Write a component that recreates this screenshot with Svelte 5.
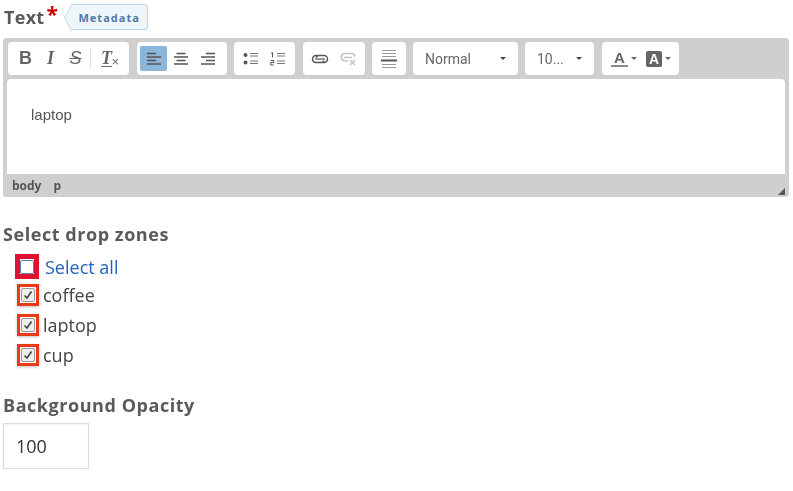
<script lang="ts">
	const zones = ['coffee', 'laptop', 'cup'];
</script>

<div class="page">
	<div class="text-head">
		<span class="field-label">Text</span>
		<span class="required">*</span>
		<span class="tag">Metadata</span>
	</div>

	<div class="editor">
		<div class="toolbar">
			<div class="group g1">
				<span class="btn b">B</span>
				<span class="btn i">I</span>
				<span class="btn s">S</span>
				<span class="sep"></span>
				<span class="btn clear"><span class="tx">T</span><span class="x">×</span></span>
			</div>
			<div class="group g2">
				<span class="btn active">
					<svg width="16" height="14" viewBox="0 0 16 14"><path d="M1 1.500h9M1 5h14M1 8.500h9M1 12h14" stroke="#555" stroke-width="1.700" /></svg>
				</span>
				<span class="btn">
					<svg width="16" height="14" viewBox="0 0 16 14"><path d="M3.500 1.500h9M1 5h14M3.500 8.500h9M1 12h14" stroke="#555" stroke-width="1.700" /></svg>
				</span>
				<span class="btn">
					<svg width="16" height="14" viewBox="0 0 16 14"><path d="M6 1.500h9M1 5h14M6 8.500h9M1 12h14" stroke="#555" stroke-width="1.700" /></svg>
				</span>
			</div>
			<div class="group g3">
				<span class="btn">
					<svg width="16" height="14" viewBox="0 0 16 14"><circle cx="2.500" cy="3" r="2" fill="#555" /><circle cx="2.500" cy="10.500" r="2" fill="#555" /><path d="M7 1.500h8M7 4h8M7 9h8M7 11.500h8" stroke="#777" stroke-width="1" /></svg>
				</span>
				<span class="btn">
					<svg width="16" height="14" viewBox="0 0 16 14"><path d="M2.500 .500v5M1 1.500l1.500-1M.800 8.500h3v2h-3v2.500h3" stroke="#555" stroke-width="1" fill="none" /><path d="M7 1.500h8M7 4h8M7 9h8M7 11.500h8" stroke="#777" stroke-width="1" /></svg>
				</span>
			</div>
			<div class="group g4">
				<span class="btn">
					<svg width="18" height="12" viewBox="0 0 18 12"><path d="M7 2.500H5a3.500 3.500 0 0 0 0 7h5a3.500 3.500 0 0 0 3-2" fill="none" stroke="#555" stroke-width="1.500" /><path d="M11 9.500h2a3.500 3.500 0 0 0 0-7H8a3.500 3.500 0 0 0-3 2" fill="none" stroke="#555" stroke-width="1.500" /><path d="M4 6h10" stroke="#555" stroke-width="1.200" /></svg>
				</span>
				<span class="btn">
					<svg width="18" height="14" viewBox="0 0 18 14"><path d="M9 9H5.500a3.800 3.800 0 0 1 0-7.500h7a3.800 3.800 0 0 1 3.500 3M5 5.500h8" fill="none" stroke="#c4c4c4" stroke-width="1.500" /><path d="M11 8l5 5M16 8l-5 5" stroke="#c4c4c4" stroke-width="1.500" /></svg>
				</span>
			</div>
			<div class="group g5">
				<svg width="16" height="20" viewBox="0 0 16 20"><path d="M1 1.500h14M1 4.500h14M1 7.500h14M1 15.500h14M1 18.500h14" stroke="#999" stroke-width="1" /><path d="M0 11.500h16" stroke="#555" stroke-width="2" /></svg>
			</div>
			<div class="group select g6"><span>Normal</span><i class="caret"></i></div>
			<div class="group select g7"><span>10...</span><i class="caret"></i></div>
			<div class="group g8">
				<span class="color"><span class="fg">A</span><i class="caret small"></i></span>
				<span class="color"><span class="bg">A</span><i class="caret small"></i></span>
			</div>
		</div>
		<div class="content"><p>laptop</p></div>
		<div class="path">
			<span>body</span>
			<span>p</span>
			<svg class="grip" width="7" height="7" viewBox="0 0 7 7"><path d="M7 0v7H0z" fill="#555" /></svg>
		</div>
	</div>

	<h3 class="section-label zones-label">Select drop zones</h3>
	<div class="zones">
		<label class="zone all">
			<span class="mark mark-all"><span class="box"></span></span>
			<span class="select-all">Select all</span>
		</label>
		{#each zones as zone}
			<label class="zone">
				<span class="mark"><span class="box checked">
					<svg width="10" height="10" viewBox="0 0 10 10"><path d="M1.500 5.500l2.500 2.500 4.500-6.500" fill="none" stroke="#444" stroke-width="1.600" /></svg>
				</span></span>
				<span>{zone}</span>
			</label>
		{/each}
	</div>

	<h3 class="section-label opacity-label">Background Opacity</h3>
	<div class="opacity-input">100</div>
</div>

<style>
	:global(body) {
		margin: 0;
		background: #fff;
	}

	.page {
		width: 793px;
		height: 491px;
		box-sizing: border-box;
		padding: 3px 4px 0 3px;
		overflow: hidden;
		font-family: 'Open Sans', sans-serif;
		color: #444;
		filter: blur(0.35px);
	}

	.text-head {
		display: flex;
		align-items: center;
		height: 28px;
		margin-bottom: 7px;
	}

	.field-label {
		font-size: 18px;
		font-weight: 700;
		color: #5a5a5a;
		margin-left: 1px;
		letter-spacing: 0.3px;
	}

	.required {
		color: #c00;
		font-size: 21px;
		font-weight: 700;
		line-height: 1;
		margin: -5px 0 0 2px;
		width: 25px;
	}

	.tag {
		position: relative;
		height: 26px;
		box-sizing: border-box;
		padding: 0 7px;
		display: flex;
		align-items: center;
		font-size: 11px;
		font-weight: 700;
		letter-spacing: 1px;
		color: #4f7aa6;
		background: #eef6fc;
		border: 1px solid #b9d3e6;
		border-left: 0;
		border-radius: 0 4px 4px 0;
	}

	.tag::before {
		content: '';
		position: absolute;
		left: -9px;
		top: 3px;
		width: 18px;
		height: 18px;
		background: #eef6fc;
		border-left: 1px solid #b9d3e6;
		border-bottom: 1px solid #b9d3e6;
		transform: scaleX(0.55) rotate(45deg);
	}

	.editor {
		width: 786px;
		height: 159px;
		background: #cfcfcf;
		border-radius: 3px;
		display: flex;
		flex-direction: column;
	}

	.toolbar {
		display: flex;
		align-items: flex-start;
		padding: 4px 0 0 5px;
		height: 37px;
		box-sizing: border-box;
		flex: none;
	}

	.group {
		height: 33px;
		margin-right: 8px;
		background: #fff;
		border-radius: 4px;
		display: flex;
		align-items: center;
		justify-content: center;
		flex: none;
		box-sizing: border-box;
		color: #555;
	}

	.g1 { width: 121px; justify-content: flex-start; padding-left: 5px; }
	.g2 { width: 90px; justify-content: flex-start; padding-left: 3px; margin-right: 7px; }
	.g3 { width: 61px; }
	.g4 { width: 62px; margin-right: 7px; }
	.g5 { width: 34px; margin-right: 7px; }
	.g6 { width: 105px; margin-right: 7px; }
	.g7 { width: 69px; }
	.g8 { width: 77px; justify-content: flex-start; padding-left: 9px; gap: 5px; }

	.btn {
		width: 27px;
		height: 25px;
		display: flex;
		align-items: center;
		justify-content: center;
		flex: none;
		border-radius: 2px;
		font-family: 'Liberation Sans', sans-serif;
		font-size: 18px;
		color: #666;
	}

	.g1 .btn { width: 25px; }
	.g4 .btn { width: 28px; }
	.btn.b { font-weight: 700; }
	.btn.i { font-style: italic; font-family: 'Liberation Serif', serif; font-weight: 700; }
	.btn.s { text-decoration: line-through; font-style: italic; }
	.sep { width: 1px; height: 19px; background: #ddd; margin: 0 3px 0 2px; }

	.clear {
		position: relative;
		font-style: italic;
		font-family: 'Liberation Serif', serif;
	}
	.tx { border-bottom: 1px solid #666; line-height: 15px; font-weight: 700; }
	.x {
		position: absolute;
		right: 0;
		bottom: 2px;
		font-size: 13px;
		font-style: normal;
		font-family: 'Liberation Sans', sans-serif;
	}

	.active { background: #8cb5da; height: 25px; }

	.select {
		justify-content: space-between;
		padding: 0 12px;
		font-family: 'Roboto', sans-serif;
		font-size: 14px;
		color: #666;
	}

	.caret {
		width: 0;
		height: 0;
		border: 3px solid transparent;
		border-top: 3px solid #444;
		border-bottom: 0;
	}

	.caret.small { border-top-color: #666; margin-left: 2px; }

	.color {
		display: flex;
		align-items: center;
		gap: 1px;
		width: 30px;
	}

	.fg {
		font-family: 'Liberation Sans', sans-serif;
		font-size: 15px;
		font-weight: 700;
		color: #666;
		border-bottom: 2px solid #888;
		width: 17px;
		text-align: center;
		line-height: 15px;
	}

	.bg {
		font-family: 'Liberation Sans', sans-serif;
		font-size: 14px;
		font-weight: 700;
		color: #fff;
		background: #666;
		border-radius: 2px;
		width: 16px;
		height: 16px;
		line-height: 16px;
		text-align: center;
	}

	.content {
		flex: none;
		height: 95px;
		margin: 4px 4px 0 4px;
		background: #fff;
		border-radius: 4px 4px 0 0;
		box-sizing: border-box;
		padding: 28px 24px 0;
		font-family: 'Liberation Sans', sans-serif;
		font-size: 15px;
		color: #555;
	}

	.content p { margin: 0; line-height: 16px; }

	.path {
		position: relative;
		flex: 1;
		display: flex;
		align-items: center;
		gap: 12px;
		padding-left: 9px;
		font-size: 12px;
		font-weight: 700;
		color: #555;
	}

	.grip { position: absolute; right: 4px; bottom: 2px; }

	.section-label {
		margin: 0;
		font-size: 18px;
		font-weight: 700;
		color: #5a5a5a;
		line-height: 24px;
		letter-spacing: 0.55px;
	}

	.zones-label { margin-top: 25px; }
	.opacity-label { margin-top: 23px; }

	.zones {
		display: flex;
		flex-direction: column;
		margin-top: 8px;
		padding-left: 14px;
	}

	.zone {
		display: flex;
		align-items: center;
		height: 30px;
		font-size: 18px;
		color: #444;
		gap: 4px;
	}

	.all { height: 25px; margin-bottom: 1px; gap: 6px; margin-left: -2px; }

	.mark {
		width: 22px;
		height: 22px;
		box-sizing: border-box;
		display: flex;
		align-items: center;
		justify-content: center;
		border: 3px solid #ea3b16;
		box-shadow: 0 1px 3px rgba(0, 0, 0, 0.25);
	}

	.mark-all {
		width: 24px;
		height: 25px;
		border: 5px solid #e01030;
		box-shadow: none;
	}

	.box {
		width: 14px;
		height: 14px;
		box-sizing: border-box;
		border: 1px solid #5a7fb5;
		border-radius: 2px;
		background: #fff;
		display: flex;
		align-items: center;
		justify-content: center;
	}

	.box.checked {
		border-color: #999;
		background: #eee;
	}

	.select-all { color: #2264b8; }

	.opacity-input {
		width: 86px;
		height: 46px;
		margin-top: 6px;
		box-sizing: border-box;
		border: 1px solid #ddd;
		box-shadow: inset 0 1px 2px rgba(0, 0, 0, 0.06), 0 0 1px rgba(0, 0, 0, 0.1);
		padding-left: 12px;
		display: flex;
		align-items: center;
		font-size: 18px;
		color: #333;
	}
</style>
